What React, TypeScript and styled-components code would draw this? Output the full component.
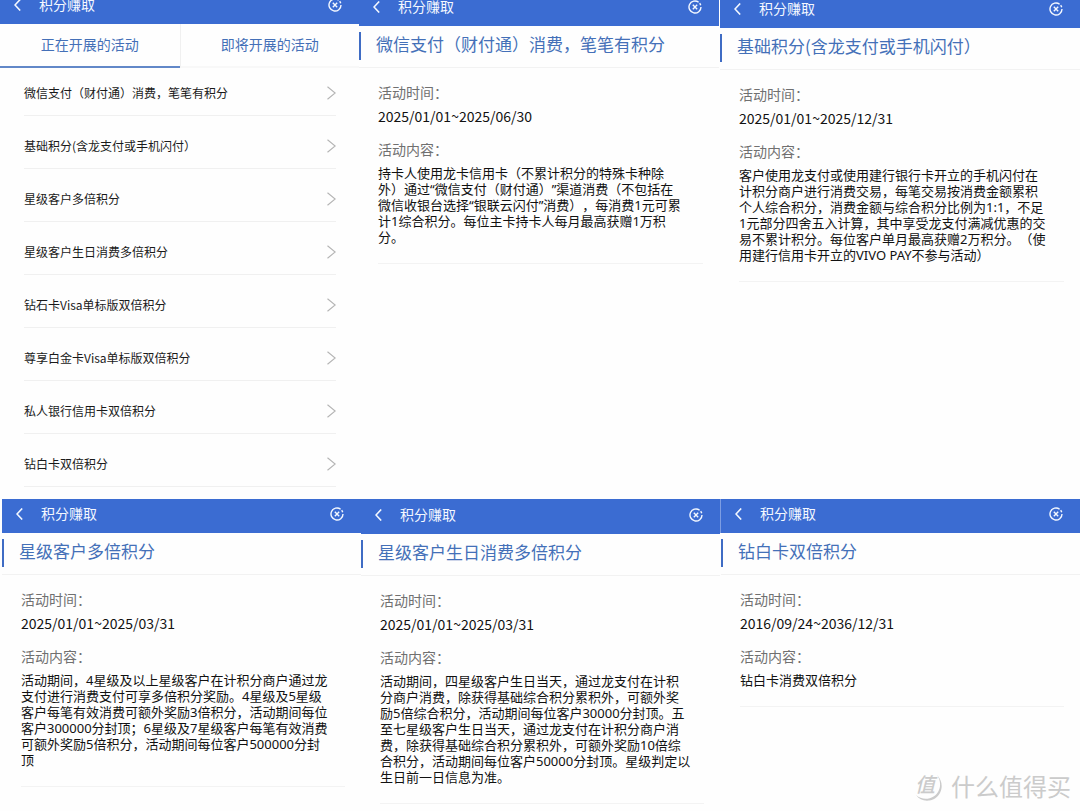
import React from "react";
import styled, { createGlobalStyle } from "styled-components";

const GlobalStyle = createGlobalStyle`
  * { box-sizing: border-box; }
  body {
    margin: 0;
    background: #fefefe;
    color: #1a1a1a;
    font-family: "Noto Sans CJK SC", sans-serif;
    font-size: 13px;
    line-height: 16px;
    text-spacing-trim: space-all;
  }
  h1, h2, p, dl, dt, dd, ul { margin: 0; padding: 0; font-weight: 400; }
  ul { list-style: none; }
  button { border: 0; padding: 0; background: none; color: inherit; font: inherit; cursor: pointer; }
`;

const Page = styled.main`
  position: relative;
  min-height: 100vh;
`;

const TopRow = styled.div`
  display: grid;
  grid-template-columns: 359fr 360fr 361fr;
`;

const BottomRow = styled.div`
  display: grid;
  grid-template-columns: 359fr 359fr 360fr;
  padding-left: 2px;
`;

const Panel = styled.section<{ $seam?: boolean }>`
  min-width: 0;
  border-left: ${(p) => (p.$seam ? "1px solid transparent" : "0")};
`;

const Header = styled.header<{ $height: number; $edge?: boolean }>`
  display: flex;
  align-items: flex-end;
  height: ${(p) => p.$height}px;
  padding: 0 17px 9px 14px;
  background: #3b6cd2;
  color: #f4f8ff;
  box-shadow: ${(p) => (p.$edge ? "-1px 0 #7d9de2" : "none")};
`;

const IconButton = styled.button`
  display: flex;
  align-items: center;
  height: 20px;
`;

const HeaderTitle = styled.h1`
  flex: 1;
  padding: 0 0 1px 18px;
  font-size: 14px;
  line-height: 20px;
`;

const TitleBar = styled.div`
  display: flex;
  align-items: flex-start;
  height: 42px;
  padding-top: 6px;
  border-bottom: 1px solid #f2f2f2;
`;

const Title = styled.h2`
  padding: 0 0 4px 15px;
  border-left: 2px solid #3f6cc4;
  color: #4470b8;
  font-size: 17px;
  line-height: 24px;
  white-space: nowrap;
`;

const Details = styled.dl`
  margin: 0 16px 0 19px;
  padding: 14px 0 18px;
  border-bottom: 1px solid #f3f3f3;
`;

const Label = styled.dt`
  color: #707070;
  font-size: 14px;
  line-height: 20px;
`;

const DateRange = styled.dd`
  padding: 4px 0 13px;
  font-size: 14px;
  line-height: 20px;
  color: #111;
`;

const Content = styled.dd`
  padding-top: 6px;
  color: #111;
  font-family: "Noto Sans", "Noto Sans CJK SC", sans-serif;
`;

const Line = styled.span`
  display: block;
  white-space: nowrap;
`;

const Tabs = styled.div`
  display: grid;
  grid-template-columns: 1fr 1fr;
  height: 44px;
`;

const Tab = styled.button<{ $active?: boolean }>`
  padding-bottom: 2px;
  border-bottom: ${(p) => (p.$active ? "2px solid #6288c8" : "2px solid #f8f8f8")};
  border-left: ${(p) => (p.$active ? "0" : "1px solid #f0f0f0")};
  color: #4470b8;
  font-size: 14px;
  line-height: 20px;
`;

const List = styled.ul`
  display: flex;
  flex-direction: column;
  gap: 5px;
  padding: 0 23px 12px 24px;
`;

const Item = styled.button`
  display: flex;
  width: 100%;
  justify-content: space-between;
  align-items: center;
  padding: 15px 0 12px;
  border-bottom: 1px solid #f0f0f0;
  color: #1a1a1a;
  font-size: 12px;
  line-height: 20px;
  text-align: left;
`;

const Watermark = styled.div`
  position: absolute;
  right: 9px;
  bottom: 9px;
  display: flex;
  align-items: center;
  gap: 9px;
  color: #cbcbcb;
  font-size: 24px;
  line-height: 32px;
`;

const Seal = styled.span`
  position: relative;
  width: 30px;
  height: 30px;
  padding-left: 3px;
  font-size: 20px;
  font-weight: 500;
  font-style: italic;
  line-height: 26px;

  svg { position: absolute; inset: 0; }
`;

const BackIcon = () => (
  <svg width="7" height="12" viewBox="0 0 7 12" fill="none" stroke="currentColor" strokeWidth="1.6">
    <path d="M6.2 .5 1 6l5.200 5.500" />
  </svg>
);

const CloseIcon = () => (
  <svg width="14" height="14" viewBox="0 0 14 14" fill="none" stroke="currentColor" strokeWidth="1.4">
    <path d="M10.600 2.200A6 6 0 1 0 13 7" />
    <path d="M11.600 3.200A6 6 0 0 1 12.700 5.200" />
    <path d="m4.800 4.800 4.400 4.400m0-4.400-4.400 4.400" />
  </svg>
);

const ForwardIcon = () => (
  <svg width="9" height="14" viewBox="0 0 9 14" fill="none" stroke="#b4b4b4" strokeWidth="1.100">
    <path d="m.5.800 7.700 6.200-7.700 6.200" />
  </svg>
);

const PanelHeader = ({ height, edge }: { height: number; edge?: boolean }) => (
  <Header $height={height} $edge={edge}>
    <IconButton aria-label="返回"><BackIcon /></IconButton>
    <HeaderTitle>积分赚取</HeaderTitle>
    <IconButton aria-label="关闭"><CloseIcon /></IconButton>
  </Header>
);

type Activity = {
  title: string;
  dates: string;
  lines: string[];
  headerHeight: number;
  seam?: boolean;
  edge?: boolean;
};

const ActivityPanel = ({ title, dates, lines, headerHeight, seam, edge }: Activity) => (
  <Panel $seam={seam}>
    <PanelHeader height={headerHeight} edge={edge} />
    <TitleBar><Title>{title}</Title></TitleBar>
    <Details>
      <Label>活动时间：</Label>
      <DateRange>{dates}</DateRange>
      <Label>活动内容：</Label>
      <Content>{lines.map((line) => <Line key={line}>{line}</Line>)}</Content>
    </Details>
  </Panel>
);

const items = [
  "微信支付（财付通）消费，笔笔有积分",
  "基础积分(含龙支付或手机闪付）",
  "星级客户多倍积分",
  "星级客户生日消费多倍积分",
  "钻石卡Visa单标版双倍积分",
  "尊享白金卡Visa单标版双倍积分",
  "私人银行信用卡双倍积分",
  "钻白卡双倍积分",
];

const topActivities: Activity[] = [
  {
    title: "微信支付（财付通）消费，笔笔有积分",
    dates: "2025/01/01~2025/06/30",
    headerHeight: 26,
    lines: [
      "持卡人使用龙卡信用卡（不累计积分的特殊卡种除",
      "外）通过“微信支付（财付通）”渠道消费（不包括在",
      "微信收银台选择“银联云闪付”消费），每消费1元可累",
      "计1综合积分。每位主卡持卡人每月最高获赠1万积",
      "分。",
    ],
  },
  {
    title: "基础积分(含龙支付或手机闪付）",
    dates: "2025/01/01~2025/12/31",
    headerHeight: 28,
    seam: true,
    lines: [
      "客户使用龙支付或使用建行银行卡开立的手机闪付在",
      "计积分商户进行消费交易，每笔交易按消费金额累积",
      "个人综合积分，消费金额与综合积分比例为1:1，不足",
      "1元部分四舍五入计算，其中享受龙支付满减优惠的交",
      "易不累计积分。每位客户单月最高获赠2万积分。（使",
      "用建行信用卡开立的VIVO PAY不参与活动）",
    ],
  },
];

const bottomActivities: Activity[] = [
  {
    title: "星级客户多倍积分",
    dates: "2025/01/01~2025/03/31",
    headerHeight: 34,
    lines: [
      "活动期间，4星级及以上星级客户在计积分商户通过龙",
      "支付进行消费支付可享多倍积分奖励。4星级及5星级",
      "客户每笔有效消费可额外奖励3倍积分，活动期间每位",
      "客户300000分封顶；6星级及7星级客户每笔有效消费",
      "可额外奖励5倍积分，活动期间每位客户500000分封",
      "顶",
    ],
  },
  {
    title: "星级客户生日消费多倍积分",
    dates: "2025/01/01~2025/03/31",
    headerHeight: 35,
    lines: [
      "活动期间，四星级客户生日当天，通过龙支付在计积",
      "分商户消费，除获得基础综合积分累积外，可额外奖",
      "励5倍综合积分，活动期间每位客户30000分封顶。五",
      "至七星级客户生日当天，通过龙支付在计积分商户消",
      "费，除获得基础综合积分累积外，可额外奖励10倍综",
      "合积分，活动期间每位客户50000分封顶。星级判定以",
      "生日前一日信息为准。",
    ],
  },
  {
    title: "钻白卡双倍积分",
    dates: "2016/09/24~2036/12/31",
    headerHeight: 34,
    seam: true,
    edge: true,
    lines: ["钻白卡消费双倍积分"],
  },
];

export default function App() {
  return (
    <Page>
      <GlobalStyle />
      <TopRow>
        <Panel>
          <PanelHeader height={24} />
          <Tabs role="tablist">
            <Tab role="tab" aria-selected="true" $active>正在开展的活动</Tab>
            <Tab role="tab" aria-selected="false">即将开展的活动</Tab>
          </Tabs>
          <List>
            {items.map((item) => (
              <li key={item}><Item>{item}<ForwardIcon /></Item></li>
            ))}
          </List>
        </Panel>
        {topActivities.map((a) => <ActivityPanel key={a.title} {...a} />)}
      </TopRow>
      <BottomRow>
        {bottomActivities.map((a) => <ActivityPanel key={a.title} {...a} />)}
      </BottomRow>
      <Watermark>
        <Seal>
          值
          <svg width="30" height="30" viewBox="0 0 30 30" fill="currentColor">
            <path d="M25 4C32 11 31 22 23 27.500C16 31.500 8 30 4 24C9 28.500 16 29 21.500 25.500C29 20.500 30 11 25 4Z" />
          </svg>
        </Seal>
        <span>什么值得买</span>
      </Watermark>
    </Page>
  );
}
